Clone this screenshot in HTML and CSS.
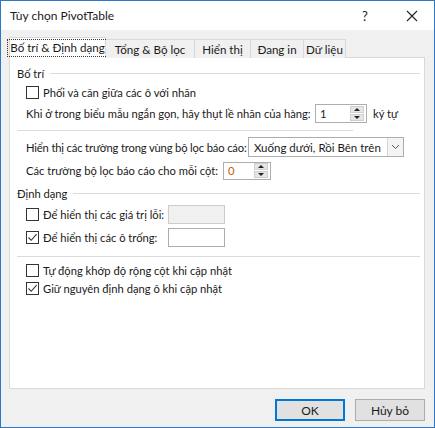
FILE: index.html
```html
<!DOCTYPE html>
<html lang="vi">
<head>
    <meta charset="UTF-8">
    <title>Tùy chọn PivotTable</title>
    <link rel="stylesheet" href="styles.css">
</head>
<body>
    <div class="window">
        <div class="titlebar">
            <span class="title">Tùy chọn PivotTable</span>
            <span class="help">?</span>
            <svg class="close" width="12" height="12" viewBox="0 0 12 12">
                <path d="M1 1 L11 11 M11 1 L1 11" stroke="#222" stroke-width="1.1" fill="none"/>
            </svg>
        </div>

        <div class="tabs">
            <div class="tab active"><span class="focus">Bố trí &amp; Định dạng</span></div>
            <div class="tab">Tổng &amp; Bộ lọc</div>
            <div class="tab">Hiển thị</div>
            <div class="tab">Đang in</div>
            <div class="tab">Dữ liệu</div>
        </div>

        <div class="panel">
            <div class="group-head"><span>Bố trí</span><div class="rule"></div></div>

            <div class="row check-row r1">
                <span class="box"></span>
                <span>Phối và căn giữa các ô với nhãn</span>
            </div>

            <div class="row r2">
                <span class="lbl-long">Khi ở trong biểu mẫu ngắn gọn, hãy thụt lề nhãn của hàng:</span>
                <div class="spin spin-wide">
                    <span class="val">1</span>
                    <div class="spin-btns"><span class="up"></span><span class="down"></span></div>
                </div>
                <span class="unit">ký tự</span>
            </div>

            <div class="sep short"></div>

            <div class="row r3">
                <span class="lbl-filter">Hiển thị các trường trong vùng bộ lọc báo cáo:</span>
                <div class="select">
                    <span>Xuống dưới, Rồi Bên trên</span>
                    <div class="select-arrow">
                        <svg width="9" height="6" viewBox="0 0 9 6"><path d="M1 1 L4.5 4.5 L8 1" stroke="#555" stroke-width="1" fill="none"/></svg>
                    </div>
                </div>
            </div>

            <div class="row r4">
                <span class="lbl-cols">Các trường bộ lọc báo cáo cho mỗi cột:</span>
                <div class="spin spin-small">
                    <span class="val orange">0</span>
                    <div class="spin-btns"><span class="up"></span><span class="down"></span></div>
                </div>
            </div>

            <div class="group-head g2"><span>Định dạng</span><div class="rule"></div></div>

            <div class="row check-row r5">
                <span class="box"></span>
                <span class="lbl-fixed">Để hiển thị các giá trị lỗi:</span>
                <div class="field disabled"></div>
            </div>

            <div class="row check-row r6">
                <span class="box checked">
                    <svg width="11" height="11" viewBox="0 0 11 11"><path d="M1.5 5.5 L4.2 8.3 L9.6 2.2" stroke="#333" stroke-width="1.1" fill="none"/></svg>
                </span>
                <span class="lbl-fixed">Để hiển thị các ô trống:</span>
                <div class="field"></div>
            </div>

            <div class="sep long"></div>

            <div class="row check-row r7">
                <span class="box"></span>
                <span>Tự động khớp độ rộng cột khi cập nhật</span>
            </div>

            <div class="row check-row r8">
                <span class="box checked">
                    <svg width="11" height="11" viewBox="0 0 11 11"><path d="M1.5 5.5 L4.2 8.3 L9.6 2.2" stroke="#333" stroke-width="1.1" fill="none"/></svg>
                </span>
                <span>Giữ nguyên định dạng ô khi cập nhật</span>
            </div>
        </div>

        <div class="footer">
            <button class="btn default">OK</button>
            <button class="btn">Hủy bỏ</button>
        </div>
    </div>
</body>
</html>
```

FILE: styles.css
```css
* {
    box-sizing: border-box;
}

body {
    margin: 0;
    font-family: Lato, "Noto Sans", sans-serif;
    font-size: 11.2px;
    color: #1a1a1a;
    white-space: nowrap;
}

.window {
    width: 435px;
    height: 428px;
    border: 1px solid #2a78c6;
    background-color: #f0f0f0;
    display: flex;
    flex-direction: column;
}

/* Thanh tiêu đề */
.titlebar {
    height: 29px;
    background-color: #fff;
    display: flex;
    align-items: center;
    padding-left: 9px;
    font-size: 12px;
}

.title {
    flex: 1;
}

.help {
    width: 12px;
    margin-right: 32px;
    font-size: 13px;
}

.close {
    margin-right: 16px;
}

/* Các tab */
.tabs {
    display: flex;
    align-items: flex-end;
    height: 28px;
    padding-left: 8px;
    margin-bottom: -1px;
    position: relative;
    z-index: 1;
    font-size: 11.6px;
}

.tab {
    height: 19px;
    padding: 0 4px;
    border: 1px solid #d9d9d9;
    border-bottom: none;
    border-left: none;
    background-color: #f0f0f0;
    display: flex;
    align-items: center;
    justify-content: center;
}

.tab:nth-child(2) { width: 89px; }
.tab:nth-child(3) { width: 56px; }
.tab:nth-child(4) { width: 53px; }
.tab:nth-child(5) { width: 42px; }

.tab.active {
    width: 97px;
    height: 21px;
    background-color: #fff;
    border-left: 1px solid #d9d9d9;
    padding: 0 1px 0 1px;
}

.focus {
    border: 1px dotted #333;
    padding: 0 2px 1px 2px;
    line-height: 15px;
}

.panel {
    margin: 0 9px 0 8px;
    height: 332px;
    background-color: #fff;
    border: 1px solid #d9d9d9;
    padding: 8px 4px 0 7px;
}

.group-head {
    display: flex;
    align-items: center;
    height: 14px;
    gap: 6px;
}

.group-head .rule {
    flex: 1;
    height: 1px;
    background-color: #dcdcdc;
}

.g2 {
    margin-top: 6px;
}

.row {
    display: flex;
    align-items: center;
    padding-left: 9px;
}

.check-row {
    height: 16px;
}

.box {
    flex-shrink: 0;
    width: 13px;
    height: 13px;
    border: 1px solid #333;
    background-color: #fff;
    margin-right: 4px;
    display: flex;
    align-items: center;
    justify-content: center;
}

.r1 { margin-top: 4px; }
.r2 { margin-top: 3px; height: 20px; }
.r3 { margin-top: 5px; height: 22px; }
.r4 { margin-top: 3px; height: 19px; }
.r5 { margin-top: 4px; height: 20px; }
.r6 { margin-top: 3px; height: 20px; }
.r7 { margin-top: 5px; }
.r8 { margin-top: 2px; }

.lbl-long { width: 289px; }
.lbl-filter { width: 222px; letter-spacing: -0.15px; }
.lbl-cols { width: 197px; }

.sep {
    height: 1px;
    background-color: #dcdcdc;
}

.sep.short {
    margin-top: 7px;
    width: 336px;
}

.sep.long {
    margin-top: 9px;
}

/* Ô số có nút tăng giảm */
.spin {
    flex-shrink: 0;
    display: flex;
    align-items: center;
    border: 1px solid #adadad;
    background-color: #fff;
    padding: 0 2px 0 4px;
}

.spin-wide {
    width: 52px;
    height: 19px;
}

.spin-small {
    width: 48px;
    height: 18px;
}

.val {
    flex: 1;
}

.orange {
    color: #c06000;
}

.spin-btns {
    width: 14px;
    height: 15px;
    display: flex;
    flex-direction: column;
    gap: 1px;
}

.spin-btns span {
    flex: 1;
    background-color: #e5e5e5;
    border: 1px solid #cfcfcf;
    position: relative;
}

.spin-btns .up::after,
.spin-btns .down::after {
    content: "";
    position: absolute;
    left: 3px;
    border-left: 3px solid transparent;
    border-right: 3px solid transparent;
}

.spin-btns .up::after {
    top: 1px;
    border-bottom: 3px solid #222;
}

.spin-btns .down::after {
    top: 1px;
    border-top: 3px solid #222;
}

.unit {
    margin-left: 6px;
}

/* Danh sách chọn */
.select {
    flex-shrink: 0;
    display: flex;
    align-items: center;
    width: 156px;
    height: 20px;
    border: 1px solid #adadad;
    background-color: #fff;
    padding-left: 5px;
    font-size: 11.5px;
}

.select span {
    flex: 1;
}

.select-arrow {
    width: 16px;
    height: 18px;
    border-left: 1px solid #d4d4d4;
    background-color: #f4f4f4;
    display: flex;
    align-items: center;
    justify-content: center;
}

.lbl-fixed {
    width: 125px;
}

.field {
    flex-shrink: 0;
    width: 57px;
    height: 19px;
    border: 1px solid #adadad;
    background-color: #fff;
}

.field.disabled {
    background-color: #f0f0f0;
    border-color: #cccccc;
}

/* Nút dưới cùng */
.footer {
    display: flex;
    justify-content: flex-end;
    gap: 10px;
    padding: 10px 9px 0 0;
}

.btn {
    width: 70px;
    height: 22px;
    font-family: inherit;
    font-size: 12px;
    background-color: #e1e1e1;
    border: 1px solid #adadad;
    color: #1a1a1a;
    padding: 0;
}

.btn.default {
    border: 2px solid #0078d7;
}
```
